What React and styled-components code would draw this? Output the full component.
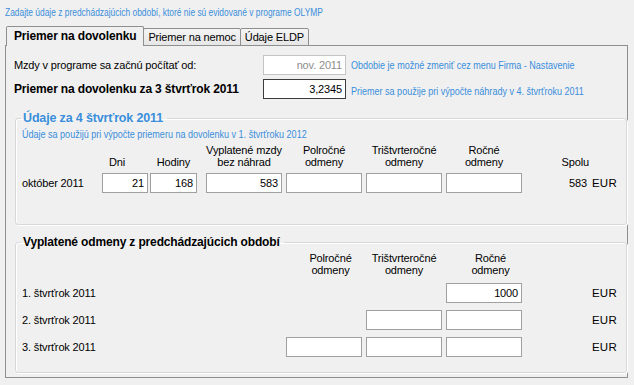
import React from 'react'
import styled, { createGlobalStyle } from 'styled-components'

const GlobalStyle = createGlobalStyle`
  html, body {
    margin: 0;
    padding: 0;
    background: #f0f0f0;
  }
  body {
    font-family: "Liberation Sans", Arial, sans-serif;
    font-size: 11px;
    letter-spacing: -0.15px;
    color: #000;
  }
`

// the blue hints use a narrow face in the original; no narrow font here, so squeeze the glyphs
const Narrow = styled.span`
  display: inline-block;
  white-space: nowrap;
  letter-spacing: 0;
  transform: scaleX(${p => p.$x || 0.82});
  transform-origin: left center;
`

const Window = styled.div`
  width: 634px;
  height: 385px;
  padding: 5px 6px 0 5px;
  box-sizing: border-box;
  overflow: hidden;
`

const Intro = styled.div`
  color: #3a8edb;
  font-size: 10.5px;
  height: 22px;
  line-height: 14px;
`

const TabBar = styled.div`
  display: flex;
  align-items: flex-end;
  height: 19px;
  padding-left: 1px;
  position: relative;
  z-index: 1;
`

const Tab = styled.div`
  height: ${p => (p.$active ? '19px' : '16px')};
  line-height: ${p => (p.$active ? '18px' : '16px')};
  padding: 0 ${p => (p.$active ? '7px' : '4px')};
  border: 1px solid #8e8f8f;
  border-bottom: ${p => (p.$active ? 'none' : '1px solid #8e8f8f')};
  border-radius: 2px 2px 0 0;
  margin-right: -1px;
  background: ${p => (p.$active ? '#f0f0f0' : 'linear-gradient(#f4f4f4, #e6e6e6)')};
  font-weight: ${p => (p.$active ? 'bold' : 'normal')};
  font-size: ${p => (p.$active ? '12px' : '11px')};
  box-sizing: content-box;
`

const Panel = styled.div`
  border: 1px solid #8e8f8f;
  margin-top: -1px;
  height: 333px;
  box-sizing: border-box;
  padding: 9px 8px 0 8px;
  background: #f0f0f0;
`

const Row = styled.div`
  display: flex;
  align-items: center;
  height: 20px;
  margin-bottom: 4px;
`

const Label = styled.div`
  width: 249px;
  flex-shrink: 0;
  font-weight: ${p => (p.$bold ? 'bold' : 'normal')};
  font-size: ${p => (p.$bold ? '12px' : '11px')};
`

const Field = styled.div`
  width: ${p => p.$w || 76}px;
  height: 20px;
  flex-shrink: 0;
  box-sizing: border-box;
  border: 1px solid ${p => (p.$dim ? '#c4c4c4' : p.$focus ? '#3c3c3c' : '#a0a0a0')};
  background: #fff;
  color: ${p => (p.$dim ? '#8d8d8d' : '#000')};
  text-align: right;
  padding-right: 3px;
  line-height: 18px;
  justify-self: start;
`

const Note = styled.div`
  color: #3a8edb;
  margin-left: 5px;
  font-size: 11px;
  white-space: nowrap;
  padding-top: ${p => p.$low ? '4px' : '0'};
`

const Group = styled.fieldset`
  margin: ${p => p.$first ? '11px' : '9px'} 0 0 1px;
  border: 1px solid #d8d8d8;
  border-radius: 3px;
  box-shadow: inset 1px 1px 0 #fff, 1px 1px 0 #fff;
  padding: 0 6px 0 6px;
  height: ${p => p.$h}px;
  box-sizing: border-box;
`

const Legend = styled.legend`
  padding: 0 4px 0 2px;
  margin-left: -1px;
  font-weight: bold;
  font-size: ${p => p.$blue ? '12.5px' : '12px'};
  color: ${p => p.$blue ? '#3a8edb' : '#000'};
  line-height: 16px;
`

const SubNote = styled.div`
  color: #3a8edb;
  font-size: 11px;
  margin-top: 2px;
  line-height: 13px;
`

const Grid = styled.div`
  display: grid;
  grid-template-columns: 80px 48px 56px 80px 80px 80px 80px 63px 31px;
  align-items: center;
`

const Head = styled.div`
  grid-column: ${p => p.$col};
  text-align: center;
  width: ${p => p.$w || 76}px;
  line-height: 12px;
  align-self: end;
  padding-right: ${p => p.$pr || 0}px;
  padding-left: ${p => p.$pl || 0}px;
  box-sizing: border-box;
`

const Cell = styled.div`
  grid-column: ${p => p.$col};
  text-align: ${p => p.$right ? 'right' : 'left'};
  align-self: ${p => p.$end ? 'end' : 'center'};
  padding-right: ${p => p.$pr || 0}px;
`

const Currency = styled.div`
  grid-column: 9;
  padding-left: 3px;
  font-size: 11.5px;
  letter-spacing: 0.2px;
`

const FirstGrid = styled(Grid)`
  margin-top: 2px;
  grid-template-rows: 25px 30px;
`

const SecondGrid = styled(Grid)`
  margin-top: 1px;
  grid-template-rows: 24px 20px 20px 20px;
  row-gap: 7px;
  padding-top: 1px;
`

const quarters = [
  { name: '1. štvrťrok 2011', cols: [7], value: '1000' },
  { name: '2. štvrťrok 2011', cols: [6, 7] },
  { name: '3. štvrťrok 2011', cols: [5, 6, 7] },
]

function Headers({ spolu, shift }) {
  return (
    <>
      <Head $col={5} $pl={shift}>Polročné<br />odmeny</Head>
      <Head $col={6}>Trištvrteročné<br />odmeny</Head>
      <Head $col={7} $pl={shift}>Ročné<br />odmeny</Head>
      {spolu && <Cell $col={8} $right $end>Spolu</Cell>}
    </>
  )
}

export default function App() {
  return (
    <Window>
      <GlobalStyle />
      <Intro>
        <Narrow $x={0.8}>Zadajte údaje z predchádzajúcich období, ktoré nie sú evidované v programe OLYMP</Narrow>
      </Intro>
      <TabBar>
        <Tab $active>Priemer na dovolenku</Tab>
        <Tab>Priemer na nemoc</Tab>
        <Tab>Údaje ELDP</Tab>
      </TabBar>
      <Panel>
        <Row>
          <Label>Mzdy v programe sa začnú počítať od:</Label>
          <Field $w={83} $dim>nov. 2011</Field>
          <Note><Narrow>Obdobie je možné zmeniť cez menu Firma - Nastavenie</Narrow></Note>
        </Row>
        <Row>
          <Label $bold>Priemer na dovolenku za 3 štvrťrok 2011</Label>
          <Field $w={83} $focus>3,2345</Field>
          <Note $low><Narrow>Priemer sa použije pri výpočte náhrady v 4. štvrťroku 2011</Narrow></Note>
        </Row>

        <Group $first $h={115}>
          <Legend $blue>Údaje za 4 štvrťrok 2011</Legend>
          <SubNote>
            <Narrow>Údaje sa použijú pri výpočte priemeru na dovolenku v 1. štvrťroku 2012</Narrow>
          </SubNote>
          <FirstGrid>
            <Head $col={2} $w={46} $pr={16}>Dni</Head>
            <Head $col={3} $w={47}>Hodiny</Head>
            <Head $col={4}>Vyplatené mzdy<br />bez náhrad</Head>
            <Headers spolu />
            <Cell $col={1}>október 2011</Cell>
            <Field style={{ gridColumn: 2 }} $w={46}>21</Field>
            <Field style={{ gridColumn: 3 }} $w={47}>168</Field>
            <Field style={{ gridColumn: 4 }}>583</Field>
            <Field style={{ gridColumn: 5 }} />
            <Field style={{ gridColumn: 6 }} />
            <Field style={{ gridColumn: 7 }} />
            <Cell $col={8} $right $pr={2}>583</Cell>
            <Currency>EUR</Currency>
          </FirstGrid>
        </Group>

        <Group $h={139}>
          <Legend>Vyplatené odmeny z predchádzajúcich období</Legend>
          <SecondGrid>
            <Headers shift={13} />
            {quarters.map(q => (
              <React.Fragment key={q.name}>
                <Cell $col={1} style={{ gridColumnEnd: 'span 4' }}>{q.name}</Cell>
                {q.cols.map(c => (
                  <Field key={c} style={{ gridColumn: c }}>{c === 7 ? q.value : null}</Field>
                ))}
                <Currency>EUR</Currency>
              </React.Fragment>
            ))}
          </SecondGrid>
        </Group>
      </Panel>
    </Window>
  )
}
